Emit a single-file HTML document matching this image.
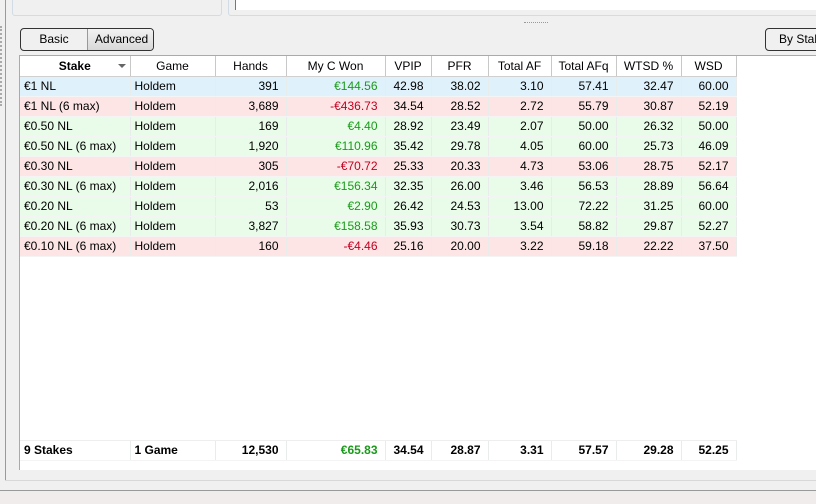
<!DOCTYPE html><html><head><meta charset="utf-8"><style>
*{margin:0;padding:0;box-sizing:border-box}
body{width:816px;height:504px;background:#f0f0f0;font-family:"Liberation Sans",Tahoma,sans-serif;font-size:12px;color:#000;position:relative;overflow:hidden}
.a{position:absolute}
table{border-collapse:collapse;table-layout:fixed;position:absolute;left:20px;top:56px}
td,th{height:20px;padding:0 4px;white-space:nowrap;overflow:hidden;border-right:1px solid #e8ecea;border-bottom:1px solid #f4f4f4}
th{font-weight:normal;text-align:center;border-right:1px solid #c8c8c8;border-bottom:1px solid #d0d0d0;height:20px;background:#fff}
td.r{text-align:right;padding-right:7px}
tr.b td{background:#dff1fb}
tr.rd td{background:#fde5e5}
tr.g td{background:#e9fbe9}
.gn{color:#1a9a1a}.rn{color:#c00020}
</style></head><body>
<div class="a" style="left:5px;top:0;width:1px;height:481px;background:#9a9a9a"></div>
<div class="a" style="left:0;top:26px;width:3px;height:80px;border-left:2px dotted #aaa"></div>
<div class="a" style="left:12px;top:-5px;width:210px;height:21px;border:1px solid #d3dce4;border-radius:3px"></div>
<div class="a" style="left:228px;top:-5px;width:600px;height:21px;border:1px solid #d3dce4;border-radius:3px"></div>
<div class="a" style="left:235px;top:-2px;width:590px;height:12px;background:#fff;border-left:1px solid #777"></div>
<div class="a" style="left:524px;top:22px;width:24px;height:2px;border-top:1px dotted #999"></div>
<div class="a" style="left:20px;top:28px;width:134px;height:23px;border:1px solid #333;border-radius:4px;overflow:hidden;background:#f0f0f0">
<div class="a" style="left:0;top:0;width:66px;height:21px;text-align:center;line-height:21px">Basic</div>
<div class="a" style="left:66px;top:0;width:68px;height:21px;text-align:center;line-height:21px;border-left:1px solid #999;background:linear-gradient(#f2f2f2,#d8d8d8)">Advanced</div></div>
<div class="a" style="left:765px;top:28px;width:60px;height:23px;border:1px solid #333;border-radius:4px;line-height:21px;padding-left:13px;background:#f0f0f0;text-align:left;white-space:nowrap;overflow:hidden">By Stake</div>
<div class="a" style="left:19px;top:55px;width:797px;height:415px;background:#fff;border-left:1px solid #aaa;border-top:1px solid #aaa"></div>
<table>
<colgroup><col style="width:110px"><col style="width:85px"><col style="width:71px"><col style="width:99px"><col style="width:46px"><col style="width:57px"><col style="width:63px"><col style="width:65px"><col style="width:65px"><col style="width:55px"></colgroup>
<tr><th style="font-weight:bold;position:relative">Stake<span style="position:absolute;right:4px;top:8px;border-left:4px solid transparent;border-right:4px solid transparent;border-top:4px solid #666"></span></th><th>Game</th><th>Hands</th><th>My C Won</th><th>VPIP</th><th>PFR</th><th>Total AF</th><th>Total AFq</th><th>WTSD %</th><th>WSD</th></tr>
<tr class="b"><td>€1 NL</td><td>Holdem</td><td class="r">391</td><td class="r gn">€144.56</td><td class="r">42.98</td><td class="r">38.02</td><td class="r">3.10</td><td class="r">57.41</td><td class="r">32.47</td><td class="r">60.00</td></tr>
<tr class="rd"><td>€1 NL (6 max)</td><td>Holdem</td><td class="r">3,689</td><td class="r rn">-€436.73</td><td class="r">34.54</td><td class="r">28.52</td><td class="r">2.72</td><td class="r">55.79</td><td class="r">30.87</td><td class="r">52.19</td></tr>
<tr class="g"><td>€0.50 NL</td><td>Holdem</td><td class="r">169</td><td class="r gn">€4.40</td><td class="r">28.92</td><td class="r">23.49</td><td class="r">2.07</td><td class="r">50.00</td><td class="r">26.32</td><td class="r">50.00</td></tr>
<tr class="g"><td>€0.50 NL (6 max)</td><td>Holdem</td><td class="r">1,920</td><td class="r gn">€110.96</td><td class="r">35.42</td><td class="r">29.78</td><td class="r">4.05</td><td class="r">60.00</td><td class="r">25.73</td><td class="r">46.09</td></tr>
<tr class="rd"><td>€0.30 NL</td><td>Holdem</td><td class="r">305</td><td class="r rn">-€70.72</td><td class="r">25.33</td><td class="r">20.33</td><td class="r">4.73</td><td class="r">53.06</td><td class="r">28.75</td><td class="r">52.17</td></tr>
<tr class="g"><td>€0.30 NL (6 max)</td><td>Holdem</td><td class="r">2,016</td><td class="r gn">€156.34</td><td class="r">32.35</td><td class="r">26.00</td><td class="r">3.46</td><td class="r">56.53</td><td class="r">28.89</td><td class="r">56.64</td></tr>
<tr class="g"><td>€0.20 NL</td><td>Holdem</td><td class="r">53</td><td class="r gn">€2.90</td><td class="r">26.42</td><td class="r">24.53</td><td class="r">13.00</td><td class="r">72.22</td><td class="r">31.25</td><td class="r">60.00</td></tr>
<tr class="g"><td>€0.20 NL (6 max)</td><td>Holdem</td><td class="r">3,827</td><td class="r gn">€158.58</td><td class="r">35.93</td><td class="r">30.73</td><td class="r">3.54</td><td class="r">58.82</td><td class="r">29.87</td><td class="r">52.27</td></tr>
<tr class="rd"><td>€0.10 NL (6 max)</td><td>Holdem</td><td class="r">160</td><td class="r rn">-€4.46</td><td class="r">25.16</td><td class="r">20.00</td><td class="r">3.22</td><td class="r">59.18</td><td class="r">22.22</td><td class="r">37.50</td></tr>
<tr><td style="height:184px;border-bottom:1px solid #eee;border-right:none" colspan="10"></td></tr>
<tr style="font-weight:bold"><td>9 Stakes</td><td>1 Game</td><td class="r">12,530</td><td class="r gn">€65.83</td><td class="r">34.54</td><td class="r">28.87</td><td class="r">3.31</td><td class="r">57.57</td><td class="r">29.28</td><td class="r">52.25</td></tr>
</table>
<div class="a" style="left:5px;top:480px;width:811px;height:1px;background:#d8d8d8"></div>
<div class="a" style="left:0;top:490px;width:816px;height:1px;background:#999"></div>
<div class="a" style="left:0;top:491px;width:816px;height:13px;background:#efeceb"></div>
</body></html>
